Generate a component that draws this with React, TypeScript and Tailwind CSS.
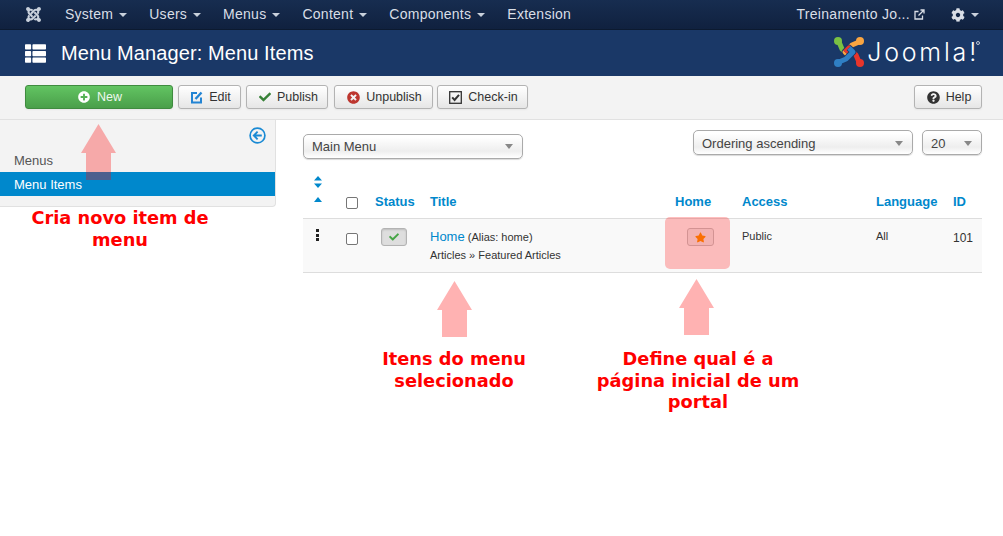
import React from 'react';
import { FaJoomla, FaPlusCircle, FaCheck, FaTimesCircle, FaQuestionCircle, FaCog, FaStar, FaThList } from 'react-icons/fa';

const Caret = () => (
  <span className="ml-[6px] inline-block w-0 h-0 border-x-[4px] border-x-transparent border-t-[4px] border-t-[#c9d1dc] align-middle" />
);

const navItems = ['System', 'Users', 'Menus', 'Content', 'Components'];

const ToolButton = ({ icon, label, className = '' }: { icon: React.ReactNode; label: string; className?: string }) => (
  <button className={`h-[24px] flex items-center justify-center gap-[6px] pl-[11px] pr-[9px] whitespace-nowrap rounded-[3px] border shadow-[0_1px_2px_rgba(0,0,0,0.05)] text-[12.5px] bg-gradient-to-b ${className}`}>
    <span className="w-[13px] flex justify-center">{icon}</span>
    {label}
  </button>
);

const plainBtn = 'border-[#b3b3b3] from-white to-[#e6e6e6] text-[#333]';

const SelectBox = ({ label, className = '' }: { label: string; className?: string }) => (
  <div className={`h-[25px] flex items-center justify-between pl-[8px] pr-[9px] rounded-[5px] border border-[#aaa] bg-gradient-to-b from-white from-10% via-[#eeeeee] via-70% to-white text-[13px] text-[#444] shadow-[0_1px_1px_rgba(0,0,0,0.15)] ${className}`}>
    <span>{label}</span>
    <span className="w-0 h-0 border-x-[4px] border-x-transparent border-t-[5px] border-t-[#888]" />
  </div>
);

const tableCols = 'grid grid-cols-[43px_29px_55px_245px_67px_134px_77px_29px]';

const Checkbox = () => <span className="block w-[12px] h-[12px] rounded-[2px] border border-[#767676] bg-white" />;

const Arrow = ({ className }: { className: string }) => (
  <svg className={`absolute pointer-events-none ${className}`} width="35" height="56" viewBox="0 0 35 56">
    <path d="M17.5 0 L35 29 H30 V56 H5 V29 H0 Z" fill="#ff0000" fillOpacity="0.3" />
  </svg>
);

const Note = ({ className, lines }: { className: string; lines: string[] }) => (
  <div className={`absolute text-center text-[17.8px] leading-[21.5px] font-bold text-[#ff0000] font-['DejaVu_Sans',sans-serif] whitespace-nowrap ${className}`}>
    {lines.map((l) => (
      <div key={l}>{l}</div>
    ))}
  </div>
);

const logoParts = [
  { d: 'M5 5 L8 12 L15 19 L19 15', c: '#7ac143' },
  { d: 'M25 5 L18 8 L11 15 L15 19', c: '#f9a541' },
  { d: 'M25 25 L22 18 L15 11 L11 15', c: '#e8352b' },
  { d: 'M5 25 L12 22 L19 15 L15 11', c: '#2f7fc4' },
];

const JoomlaLogo = () => (
  <svg width="30" height="30" viewBox="0 0 30 30" className="shrink-0">
    {logoParts.map((p) => (
      <g key={p.c} fill="none" strokeLinejoin="round">
        <path d={p.d} stroke="#1a3867" strokeWidth="6.6" />
        <path d={p.d} stroke={p.c} strokeWidth="5" />
      </g>
    ))}
    <circle cx="4" cy="4" r="4" fill="#7ac143" />
    <circle cx="26" cy="4" r="4" fill="#f9a541" />
    <circle cx="26" cy="26" r="4" fill="#e8352b" />
    <circle cx="4" cy="26" r="4" fill="#2f7fc4" />
  </svg>
);

const EditIcon = () => (
  <svg width="13" height="13" viewBox="0 0 13 13" fill="none" stroke="#2384d3">
    <path d="M7 2 H2 V11.5 H11 V6.5" strokeWidth="2" />
    <path d="M5.5 8 L11.5 1.5" strokeWidth="2.4" />
  </svg>
);

const CheckInIcon = () => (
  <svg width="13" height="13" viewBox="0 0 13 13" fill="none" stroke="#333">
    <rect x="0.7" y="0.7" width="11.6" height="11.6" strokeWidth="1.3" />
    <path d="M3.2 6.4 L5.6 9 L10 3.8" strokeWidth="2" />
  </svg>
);

export default function App() {
  return (
    <div className="relative w-[1003px] h-[536px] overflow-hidden bg-white font-['Liberation_Sans',Arial,sans-serif] text-[13px] text-[#333]">
      {/* top nav */}
      <nav className="h-[30px] flex items-center bg-gradient-to-b from-[#172d50] to-[#10213f] border-b border-[#0c1a30] text-[14px] text-[#d9dee6]">
        <div className="w-[65px] flex justify-center pr-[1px] pl-[2px]">
          <FaJoomla className="text-[17px] text-[#c9d1dc]" />
        </div>
        <div className="flex items-center gap-[22px] tracking-[0.26px]">
          {navItems.map((n) => (
            <span key={n} className="flex items-center">
              {n}
              <Caret />
            </span>
          ))}
          <span>Extension</span>
        </div>
        <div className="ml-auto flex items-center pr-[24px] tracking-[0.3px]">
          <span>Treinamento Jo...</span>
          <svg className="ml-[4px]" width="11" height="11" viewBox="0 0 11 11" fill="none" stroke="#d9dee6" strokeWidth="1.3">
            <path d="M8.5 6.5 V10 H1 V2.5 H4.5" />
            <path d="M4.5 6.5 L9.5 1.5 M6.5 1 H10 V4.5" />
          </svg>
          <FaCog className="ml-[26px] text-[14px] text-[#d9dee6]" />
          <Caret />
        </div>
      </nav>

      {/* title bar */}
      <header className="h-[46px] flex items-center bg-[#1a3867] px-[25px]">
        <FaThList className="text-[21px] text-white" />
        <h1 className="ml-[15px] text-[20px] font-normal text-white tracking-[0.1px]">Menu Manager: Menu Items</h1>
        <div className="ml-auto flex items-center gap-[3px] -mt-[2px] -mr-[1px]">
          <JoomlaLogo />
          <span className="relative text-[25px] font-light leading-none text-white font-['Inter',sans-serif] tracking-[2.8px]">
            Joomla!
            <span className="absolute -right-[1px] top-[1px] w-[4px] h-[4px] rounded-full border border-white/70" />
          </span>
        </div>
      </header>

      {/* toolbar */}
      <div className="h-[44px] flex items-center bg-[#f3f3f3] border-b border-[#e1e1e1] pl-[25px] pr-[21px] pb-[1px]">
        <ToolButton
          className="w-[148px] border-[#3f8b3f] from-[#62c462] to-[#4a9f4a] text-[#eef8ee]"
          icon={<FaPlusCircle className="text-[12px] text-white" />}
          label="New"
        />
        <ToolButton className={`ml-[5px] w-[63px] ${plainBtn}`} icon={<EditIcon />} label="Edit" />
        <ToolButton className={`ml-[5px] w-[82px] ${plainBtn}`} icon={<FaCheck className="text-[12px] text-[#378137]" />} label="Publish" />
        <ToolButton className={`ml-[6px] w-[99px] ${plainBtn}`} icon={<FaTimesCircle className="text-[13px] text-[#bd362f]" />} label="Unpublish" />
        <ToolButton className={`ml-[4px] w-[91px] ${plainBtn}`} icon={<CheckInIcon />} label="Check-in" />
        <ToolButton className={`ml-auto w-[68px] ${plainBtn}`} icon={<FaQuestionCircle className="text-[13px] text-[#333]" />} label="Help" />
      </div>

      <div className="flex items-start">
        {/* sidebar */}
        <aside className="w-[276px] h-[87px] shrink-0 bg-[#f3f3f3] border-r border-b border-[#e1e1e1] rounded-br-[4px]">
          <div className="h-[28px] flex justify-end items-start pt-[7px] pr-[9px]">
            <svg width="17" height="17" viewBox="0 0 17 17" fill="none" stroke="#1a8ad4" strokeWidth="1.7">
              <circle cx="8.5" cy="8.5" r="7.4" />
              <path d="M8.6 4.7 L4.8 8.5 L8.6 12.3 M5 8.5 H12.8" strokeWidth="1.9" />
            </svg>
          </div>
          <div className="h-[24px] pt-[1px] flex items-center pl-[14px] text-[#555]">Menus</div>
          <div className="h-[24px] pt-[1px] flex items-center pl-[14px] bg-[#0088cc] text-white">Menu Items</div>
        </aside>

        {/* main */}
        <main className="ml-[27px] w-[679px]">
          <div className="flex items-start pt-[10px]">
            <SelectBox label="Main Menu" className="w-[220px] mt-[4px]" />
            <SelectBox label="Ordering ascending" className="w-[220px] ml-[170px] pt-[2px]" />
            <SelectBox label="20" className="w-[60px] ml-[9px] pt-[2px]" />
          </div>

          <div className={`${tableCols} mt-[13px] h-[47px] border-b border-[#dddddd] font-bold text-[#0088cc]`}>
            <div className="flex flex-col items-start pl-[10px] pt-[4px] gap-[9px]">
              <svg width="10" height="12" viewBox="0 0 10 12" fill="#0088cc">
                <path d="M5 0 L9 4.5 H1 Z M5 12 L9 7.5 H1 Z" />
              </svg>
              <svg width="10" height="5" viewBox="0 0 10 5" fill="#0088cc">
                <path d="M5 0 L9 5 H1 Z" />
              </svg>
            </div>
            <div className="pt-[25px]">
              <Checkbox />
            </div>
            <div className="pt-[20px]">Status</div>
            <div className="pt-[20px]">Title</div>
            <div className="pt-[20px]">Home</div>
            <div className="pt-[20px]">Access</div>
            <div className="pt-[20px]">Language</div>
            <div className="pt-[20px]">ID</div>
          </div>

          <div className={`${tableCols} h-[54px] border-b border-[#dddddd] bg-[#f9f9f9]`}>
            <div className="pl-[13px] pt-[10px]">
              <div className="flex flex-col gap-[1.5px]">
                <span className="w-[3px] h-[3px] bg-[#222]" />
                <span className="w-[3px] h-[3px] bg-[#222]" />
                <span className="w-[3px] h-[3px] bg-[#222]" />
              </div>
            </div>
            <div className="pt-[14px]">
              <Checkbox />
            </div>
            <div className="pt-[9px] pl-[6px]">
              <span className="w-[26px] h-[18px] flex items-center justify-center rounded-[3px] border border-[#b3b3b3] bg-[#dedede] shadow-[inset_0_1px_2px_rgba(0,0,0,0.15)]">
                <FaCheck className="text-[10px] text-[#46a546]" />
              </span>
            </div>
            <div className="pt-[9px] text-[11px] leading-[18px]">
              <div>
                <span className="text-[13px] text-[#0088cc]">Home</span> (Alias: home)
              </div>
              <div>Articles » Featured Articles</div>
            </div>
            <div className="pt-[9px] pl-[12px]">
              <span className="w-[27px] h-[18px] flex items-center justify-center rounded-[3px] border border-[#c4c4c4] bg-[#eeeeee]">
                <FaStar className="text-[11px] text-[#f89406]" />
              </span>
            </div>
            <div className="pt-[9px] text-[11px]">Public</div>
            <div className="pt-[9px] text-[11px]">All</div>
            <div className="pt-[11px] text-[12px] leading-[17px]">101</div>
          </div>
        </main>
      </div>

      {/* annotations drawn over the page */}
      <div className="absolute left-[665px] top-[217px] w-[65px] h-[52px] rounded-[5px] bg-[#ff0000]/25" />
      <Arrow className="left-[81px] top-[124px]" />
      <Arrow className="left-[437px] top-[281px]" />
      <Arrow className="left-[679px] top-[279px]" />
      <Note className="left-[0px] w-[240px] top-[207px]" lines={['Cria novo item de', 'menu']} />
      <Note className="left-[334px] w-[240px] top-[348px]" lines={['Itens do menu', 'selecionado']} />
      <Note className="left-[578px] w-[240px] top-[348px]" lines={['Define qual é a', 'página inicial de um', 'portal']} />
    </div>
  );
}
